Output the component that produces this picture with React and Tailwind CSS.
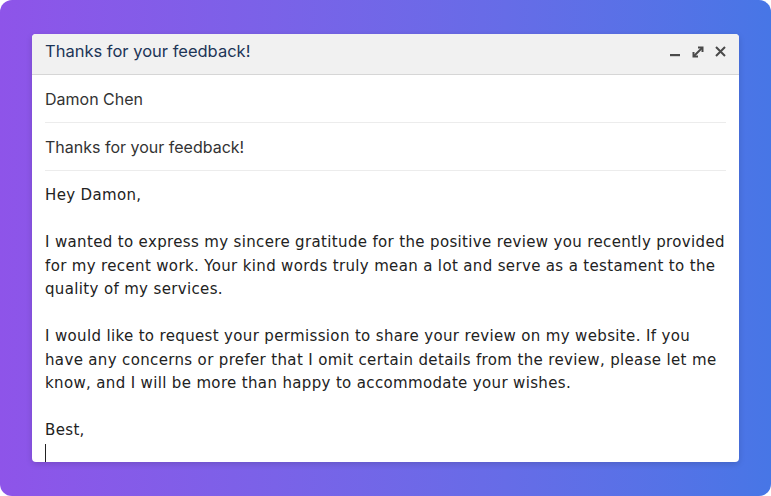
import { useState } from "react";

function WindowIcons() {
  return (
    <div className="flex items-center gap-[9px] text-[#4a4a4a]">
      <svg width="12" height="12" viewBox="0 0 12 12">
        <rect x="0" y="8" width="10" height="2.2" fill="currentColor" />
      </svg>
      <svg width="14" height="14" viewBox="0 0 14 14" fill="none" stroke="currentColor" strokeWidth="2">
        <path d="M3 11 L11 3" />
        <path d="M7 2.5 H11.5 V7" strokeWidth="2" />
        <path d="M2.5 7 V11.5 H7" strokeWidth="2" />
      </svg>
      <svg width="13" height="13" viewBox="0 0 13 13" fill="none" stroke="currentColor" strokeWidth="2">
        <path d="M2 2 L11 11 M11 2 L2 11" />
      </svg>
    </div>
  );
}

export default function App() {
  const [to] = useState("Damon Chen");
  const [subject] = useState("Thanks for your feedback!");

  return (
    <div className="w-[771px] h-[496px] bg-white">
      <div className="w-full h-full rounded-[12px] bg-gradient-to-r from-[#8e54e9] to-[#4776e6] pt-[34px] pl-[32px]">
        <div className="w-[707px] h-[428px] bg-white rounded-[4px] shadow-[0_2px_6px_rgba(0,0,0,0.15)] overflow-hidden flex flex-col">
          {/* header */}
          <div className="h-[41px] shrink-0 bg-[#f1f1f1] border-b border-[#d6d6d6] flex items-center justify-between pl-[13px] pr-[12px] pb-[5px]">
            <span className="text-[16.5px] text-[#1d3557] font-['Inter',sans-serif]">
              Thanks for your feedback!
            </span>
            <WindowIcons />
          </div>

          <div className="px-[13px] flex-1 flex flex-col">
            <div className="h-[48px] flex items-center border-b border-[#ececec] text-[16px] text-[#333] font-['Inter',sans-serif]">
              {to}
            </div>
            <div className="h-[48px] flex items-center border-b border-[#ececec] text-[16px] text-[#333] font-['Inter',sans-serif]">
              {subject}
            </div>

            <div className="pt-[13px] text-[15px] leading-[23.5px] tracking-[0.35px] text-[#222] font-['DejaVu_Sans',sans-serif]">
              <p>Hey Damon,</p>
              <p className="mt-[23.5px]">
                I wanted to express my sincere gratitude for the positive review you recently provided
                <br />
                for my recent work. Your kind words truly mean a lot and serve as a testament to the
                <br />
                quality of my services.
              </p>
              <p className="mt-[23.5px]">
                I would like to request your permission to share your review on my website. If you
                <br />
                have any concerns or prefer that I omit certain details from the review, please let me
                <br />
                know, and I will be more than happy to accommodate your wishes.
              </p>
              <p className="mt-[23.5px]">Best,</p>
              <div className="h-[23.5px] flex items-start pt-[1px]">
                <span className="w-px h-[18px] bg-[#222]" />
              </div>
            </div>
          </div>
        </div>
      </div>
    </div>
  );
}
